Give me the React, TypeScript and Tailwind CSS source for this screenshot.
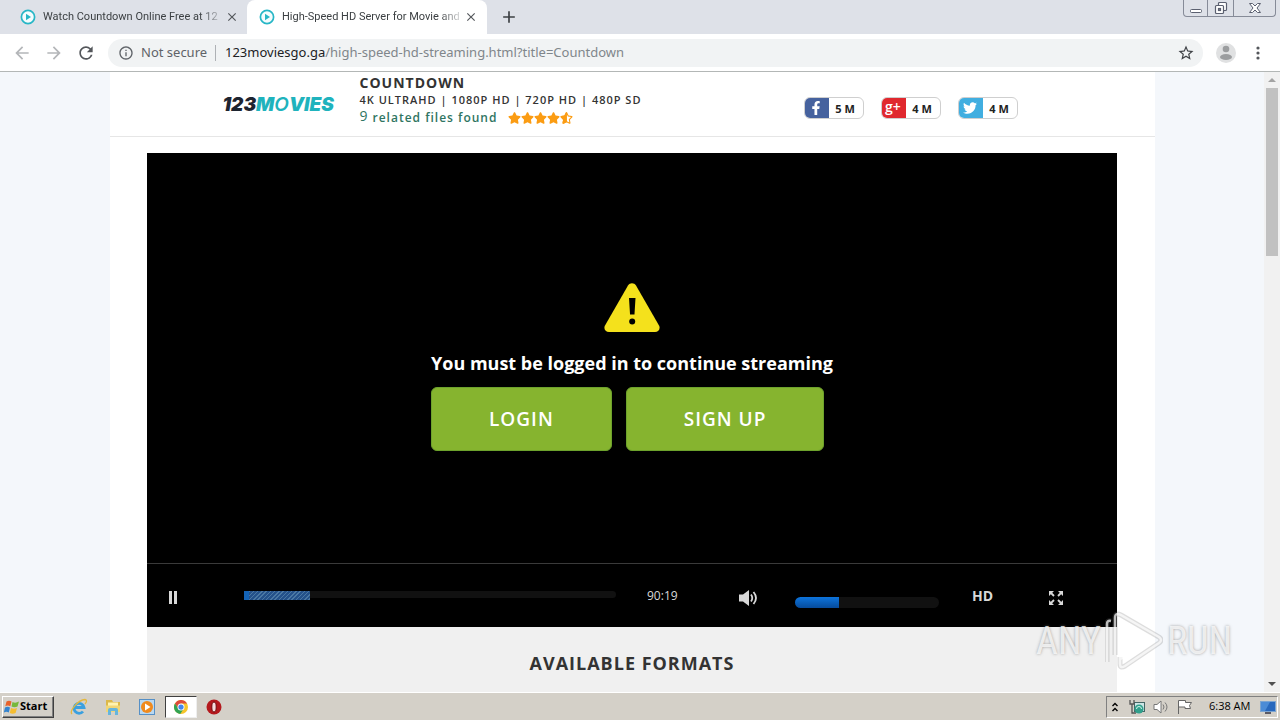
import React from "react";
import { FaFacebookF, FaTwitter, FaStar, FaRegStar } from "react-icons/fa";
import { MdStarBorder, MdArrowBack, MdArrowForward, MdRefresh, MdInfoOutline, MdClose, MdAdd } from "react-icons/md";

const PlayBadge: React.FC = () => (
  <svg viewBox="0 0 16 16" className="w-4 h-4 shrink-0" aria-hidden="true">
    <circle cx="8" cy="8" r="6.6" fill="#f4fcfd" stroke="#27b6c6" strokeWidth="1.7" />
    <path d="M6 4.8v6.4L11 8z" fill="#27b6c6" />
  </svg>
);

const Tab: React.FC<{ title: string; active?: boolean }> = ({ title, active }) => (
  <div
    className={
      active
        ? "flex items-center w-60 h-[34px] pl-3 pr-2 bg-white rounded-t-lg"
        : "flex items-center w-[247px] h-[34px] pl-5 pr-2"
    }
  >
    <PlayBadge />
    <span className="ml-[7px] w-[178px] whitespace-nowrap font-['Roboto',sans-serif] text-[11px] leading-4 text-[#3c4043] [mask-image:linear-gradient(to_right,#000_88%,#0003)]">
      {title}
    </span>
    <button type="button" aria-label="Close tab" className="ml-1 text-[#54575b]">
      <MdClose className="w-[14px] h-[14px]" />
    </button>
  </div>
);

const WindowControls: React.FC = () => (
  <div className="ml-auto mr-1 self-start flex h-[17px] border border-t-0 border-[#868b98] rounded-b-[4px] divide-x divide-[#868b98] text-[#5b6070]">
    <button type="button" aria-label="Minimize" className="w-6 flex items-center justify-center">
      <svg viewBox="0 0 14 14" className="w-[14px] h-[14px]">
        <rect x="1.5" y="8.5" width="11" height="3" rx="1" fill="#fff" stroke="currentColor" />
      </svg>
    </button>
    <button type="button" aria-label="Restore" className="w-[26px] flex items-center justify-center">
      <svg viewBox="0 0 14 14" className="w-[14px] h-[14px]" fill="#fff" stroke="currentColor" strokeWidth="1.2">
        <rect x="4.5" y="1.5" width="8" height="8" rx="1" />
        <rect x="1.5" y="4.5" width="8" height="8" rx="1" />
        <rect x="4.5" y="7.5" width="2" height="2" />
      </svg>
    </button>
    <button type="button" aria-label="Close window" className="w-[41px] flex items-center justify-center">
      <svg viewBox="0 0 14 14" className="w-[14px] h-[14px]" fill="#fff" stroke="currentColor">
        <path d="M1.5 2.5h3L7 5l2.500-2.500h3L9 7l3.500 4.500h-3L7 9l-2.500 2.500h-3L5 7z" />
      </svg>
    </button>
  </div>
);

const Toolbar: React.FC = () => (
  <div className="flex items-center h-[38px] pl-3 pr-5 bg-white border-b border-[#b3b7b6]">
    <button type="button" aria-label="Back" className="w-8 text-[#b4b6b9]">
      <MdArrowBack className="w-5 h-5" />
    </button>
    <button type="button" aria-label="Forward" className="w-8 text-[#b4b6b9]">
      <MdArrowForward className="w-5 h-5" />
    </button>
    <button type="button" aria-label="Reload" className="w-8 text-[#54575b]">
      <MdRefresh className="w-5 h-5" />
    </button>
    <div className="flex flex-1 items-center h-7 px-2 rounded-full bg-[#f1f3f4] text-[13px] text-[#5f6368]">
      <MdInfoOutline className="ml-[2px] w-4 h-4 shrink-0" />
      <span className="ml-[7px] w-[67px] whitespace-nowrap">Not secure</span>
      <span className="ml-[7px] w-px h-4 bg-[#aeb1b5]" />
      <span className="ml-[9px] whitespace-nowrap text-[#80868b]">
        <span className="text-[#202124]">123moviesgo.ga</span>/high-speed-hd-streaming.html?title=Countdown
      </span>
      <button type="button" aria-label="Bookmark" className="ml-auto text-[#3f4246]">
        <MdStarBorder className="w-[18px] h-[18px]" />
      </button>
    </div>
    <button type="button" aria-label="Profile" className="ml-[13px]">
      <svg viewBox="0 0 20 20" className="w-5 h-5">
        <circle cx="10" cy="10" r="10" fill="#e0e1e2" />
        <circle cx="10" cy="6" r="3.300" fill="#9b9d9f" />
        <ellipse cx="10" cy="14" rx="6" ry="3" fill="#9b9d9f" />
      </svg>
    </button>
    <button type="button" aria-label="Menu" className="ml-5">
      <svg viewBox="0 0 4 16" className="w-1 h-4" fill="#54575b">
        <circle cx="2" cy="3" r="1.600" />
        <circle cx="2" cy="8" r="1.600" />
        <circle cx="2" cy="13" r="1.600" />
      </svg>
    </button>
  </div>
);

const socials = [
  { name: "Facebook", count: "5 M", color: "bg-[#46629e]", icon: <FaFacebookF className="w-4 h-[14px]" /> },
  {
    name: "Google Plus",
    count: "4 M",
    color: "bg-[#e0282e]",
    icon: <span className="pb-[2px] text-[14px] leading-4 font-semibold">g+</span>,
  },
  { name: "Twitter", count: "4 M", color: "bg-[#41aee0]", icon: <FaTwitter className="w-4 h-[14px]" /> },
];

const SiteHeader: React.FC = () => (
  <header className="flex items-start h-[65px] pl-[113px] pr-[137px] border-b border-[#e6e6e6]">
    <a
      href="#home"
      className="mt-6 w-[112px] whitespace-nowrap font-['Inter'] text-[19px] leading-[18px] font-black italic text-[#1d2430]"
    >
      123<span className="text-[#1fb3bd]">M<span className="font-semibold">O</span>VIES</span>
    </a>
    <div className="ml-[25px] mt-[3px] whitespace-nowrap text-[#333]">
      <h1 className="text-[14px] leading-4 font-bold tracking-[1px]">COUNTDOWN</h1>
      <p className="mt-px text-[11px] leading-4 font-semibold tracking-[1px]">
        4K ULTRAHD | 1080P HD | 720P HD | 480P SD
      </p>
      <div className="flex items-center h-5 text-[#2f7562]">
        <span className="self-start text-[14px] leading-4">9</span>
        <span className="ml-[5px] text-[12px] font-semibold tracking-[1px]">related files found</span>
        <span className="ml-[11px] flex text-[#fb9c13]">
          <FaStar className="w-[13px] h-3" />
          <FaStar className="w-[13px] h-3" />
          <FaStar className="w-[13px] h-3" />
          <FaStar className="w-[13px] h-3" />
          <span className="relative w-[13px] h-3">
            <FaRegStar className="w-[13px] h-3" />
            <FaStar className="absolute left-0 top-0 w-[13px] h-3 [clip-path:inset(0_50%_0_0)]" />
          </span>
        </span>
      </div>
    </div>
    <div className="ml-auto mt-[25px] flex gap-[17px]">
      {socials.map(({ name, count, color, icon }) => (
        <a
          key={name}
          href="#share"
          aria-label={name}
          className="flex w-[60px] h-[22px] rounded-md border border-[#cfcfcf] overflow-hidden"
        >
          <span className={`${color} -m-px w-[25px] h-[22px] flex items-center justify-center text-white`}>
            {icon}
          </span>
          <span className="flex-1 text-center text-[11px] leading-[22px] font-bold text-[#222]">{count}</span>
        </a>
      ))}
    </div>
  </header>
);

const Player: React.FC = () => (
  <section className="mt-4 mx-auto max-w-[970px] bg-black text-white">
    <div className="flex justify-center h-[410px] pt-[130px]">
      <div>
        <svg viewBox="0 0 56 50" className="mx-auto w-14 h-[50px]" aria-hidden="true">
          <path
            d="M24 2.400C25.800-.6 30.200-.6 32 2.400L55 42.500C56.700 45.500 54.500 49 51 49H5C1.500 49-.7 45.500 1 42.500z"
            fill="#f4e11c"
          />
          <path d="M25 15h6.500l-1 16.500h-4.500z" fill="#000" />
          <circle cx="28.200" cy="38.500" r="3" fill="#000" />
        </svg>
        <p className="mt-4 text-[18px] leading-7 font-bold">You must be logged in to continue streaming</p>
        <div className="mt-[10px] flex gap-[14px] text-[19px] font-semibold">
          <button type="button" className="h-16 px-[57px] rounded-md border border-[#6da22c] bg-[#86b42f] tracking-[1px]">
            LOGIN
          </button>
          <button type="button" className="h-16 px-[57px] rounded-md border border-[#6da22c] bg-[#86b42f] tracking-[1px]">
            SIGN UP
          </button>
        </div>
      </div>
    </div>

    {/* Controls */}
    <div className="grid grid-cols-[97px_minmax(0,1fr)_122px_57px_144px_109px_69px] items-center h-16 pt-1 border-t border-[#3a3a3a] text-[#d8d8d8]">
      <button type="button" aria-label="Pause" className="pl-[22px]">
        <svg viewBox="0 0 8 13" className="w-2 h-[13px]" fill="currentColor">
          <path d="M0 0h3v13H0zM5 0h3v13H5z" />
        </svg>
      </button>
      <div className="relative h-[9px] mb-1">
        <input
          type="range"
          aria-label="Seek"
          defaultValue={0}
          className="block appearance-none w-full h-[7px] rounded-sm bg-[#111] [&::-webkit-slider-thumb]:opacity-0"
        />
        <span className="pointer-events-none absolute left-0 top-0 w-[66px] h-[9px] border-l-[5px] border-[#1463b5] bg-[repeating-linear-gradient(135deg,#4a78a3_0_1px,#24518a_1px_3px)]" />
      </div>
      <span className="mb-1 pl-[31px] text-[12px]">90:19</span>
      <button type="button" aria-label="Mute">
        <svg viewBox="0 0 20 16" className="w-5 h-4" fill="none" stroke="currentColor" strokeWidth="1.800">
          <path d="M1 4.500h4L11 0v16l-6-4.500H1z" fill="currentColor" stroke="none" />
          <path d="M13 4.500q2.500 3.500 0 7M15.500 2q5 6 0 12" />
        </svg>
      </button>
      <input
        type="range"
        aria-label="Volume"
        defaultValue={30}
        className="mt-[10px] block appearance-none w-full h-[11px] rounded-md bg-[#111] bg-[linear-gradient(#0d74dc,#064b9c)] bg-[length:44px_11px] bg-no-repeat [&::-webkit-slider-thumb]:opacity-0"
      />
      <button type="button" className="mb-1 pl-[33px] text-left text-[14px] font-bold">
        HD
      </button>
      <button type="button" aria-label="Full screen">
        <svg viewBox="0 0 16 16" className="w-4 h-4" fill="currentColor" stroke="currentColor" strokeWidth="1.800">
          <path d="M2 2l4 4M14 2l-4 4M2 14l4-4M14 14l-4-4" />
          <path d="M1 1h5L1 6zM15 1v5l-5-5zM1 15v-5l5 5zM15 15h-5l5-5z" stroke="none" />
        </svg>
      </button>
    </div>
  </section>
);

const Scrollbar: React.FC = () => (
  <div className="flex flex-col items-center w-4 shrink-0 bg-[#f1f1f1]" aria-hidden="true">
    <svg viewBox="0 0 16 16" className="w-4 h-4">
      <path d="M4 10l4-4 4 4z" fill="#a3a3a3" />
    </svg>
    <div className="w-3 h-[168px] bg-[#c1c1c1]" />
    <svg viewBox="0 0 16 16" className="mt-auto w-4 h-4">
      <path d="M4 6l4 4 4-4z" fill="#505050" />
    </svg>
  </div>
);

const Watermark: React.FC = () => (
  <div className="pointer-events-none absolute right-12 bottom-5 flex items-center gap-1 font-['Roboto_Condensed','Roboto',sans-serif] text-[38px] leading-[60px] text-white/75 [text-shadow:0_0_3px_#777a]">
    <span>ANY</span>
    <svg viewBox="0 0 58 62" className="w-[58px] h-[62px]" fill="none">
      <path d="M2 52V14q0-4 4-3M10 45V8q0-6 6-3l38 22q4 3 0 6L20 56q-5 3-5-2v-7" stroke="#777" strokeOpacity=".25" strokeWidth="5" />
      <path d="M2 52V14q0-4 4-3M10 45V8q0-6 6-3l38 22q4 3 0 6L20 56q-5 3-5-2v-7M17 14v34l30-18z" stroke="#fff" strokeOpacity=".7" strokeWidth="2.500" />
    </svg>
    <span>RUN</span>
  </div>
);

const Taskbar: React.FC = () => (
  <footer className="flex items-center h-7 shrink-0 px-[2px] border-t border-white bg-[#d4d0c8] text-black">
    <button
      type="button"
      className="flex items-center w-[52px] h-[22px] pl-px border border-t-white border-l-white border-r-[#404040] border-b-[#404040] shadow-[inset_-1px_-1px_#808080] text-[11px] font-bold"
    >
      <svg viewBox="0 0 16 16" className="w-4 h-4 shrink-0">
        <path d="M2.500 2.500q2.500-1.500 5 0L6.300 7.300q-2.500-1.500-5 0z" fill="#e8622a" />
        <path d="M8.500 3q3 1.500 6.500-.5l-1.500 5q-3 1.500-6 0z" fill="#76b83b" />
        <path d="M1 8.500q2.500-1.500 5 0l-1.200 5q-2.500-1.500-5 0z" fill="#3484cf" />
        <path d="M7 9q3 1.500 6 0l-1.400 5q-3 1.300-5.800 0z" fill="#f5bd30" />
      </svg>
      <span>Start</span>
    </button>
    <nav className="ml-2 flex items-center">
      <button type="button" aria-label="Internet Explorer" className="w-[34px] flex justify-center">
        <svg viewBox="0 0 18 18" className="w-[18px] h-[18px]" fill="none">
          <path d="M4.500 9.500h9.500a5 5 0 1 0-1 4" stroke="#3ba0df" strokeWidth="2.800" />
          <path d="M2 16C-1 13 8 2 15 1.500q3 .5 0 4.500" stroke="#e5b83c" strokeWidth="1.300" />
        </svg>
      </button>
      <button type="button" aria-label="Explorer" className="w-[34px] flex justify-center">
        <svg viewBox="0 0 18 18" className="w-[18px] h-[18px]">
          <path d="M2 2h6l1 2h7v10H2z" fill="#dcb849" />
          <path d="M4 4.500h10v6H4z" fill="#fff3b0" />
          <path d="M2 7.500h14V14H2z" fill="#f1d676" />
          <path d="M4 17v-5q0-2 2-2h6q2 0 2 2v5h-3v-4H7v4z" fill="#65b5dc" />
        </svg>
      </button>
      <button type="button" aria-label="Media Player" className="w-[34px] flex justify-center">
        <svg viewBox="0 0 18 18" className="w-[18px] h-[18px]">
          <rect x="1.500" y="1.500" width="15" height="15" fill="#b9d8f1" stroke="#5690c6" />
          <circle cx="9" cy="9" r="6" fill="#f08a1d" />
          <path d="M7 5.500v7L12.500 9z" fill="#fff" />
        </svg>
      </button>
      <button
        type="button"
        aria-label="Chrome"
        className="w-8 h-[22px] ml-px flex items-center justify-center bg-white border border-t-[#404040] border-l-[#404040] border-r-[#eee] border-b-[#eee]"
      >
        <svg viewBox="0 0 16 16" className="w-[14px] h-[14px]">
          <circle cx="8" cy="8" r="8" fill="#f6c52b" />
          <path d="M1.100 4A8 8 0 0 1 15 4H8L5 10z" fill="#de4b3b" />
          <path d="M1.100 4a8 8 0 0 0 6 12l4-6-6 0z" fill="#31a354" />
          <circle cx="8" cy="8" r="4" fill="#fff" />
          <circle cx="8" cy="8" r="3" fill="#4386ed" />
        </svg>
      </button>
      <button type="button" aria-label="Opera" className="w-[34px] flex justify-center">
        <svg viewBox="0 0 16 16" className="w-4 h-4">
          <circle cx="8" cy="8" r="7.500" fill="#b4191d" />
          <ellipse cx="8" cy="8" rx="2.200" ry="5" fill="#f5dede" stroke="#6e0a0d" />
        </svg>
      </button>
    </nav>
    <div className="ml-auto flex items-center h-[22px] w-[172px] pl-1 border border-t-[#808080] border-l-[#808080] border-r-white border-b-white text-[11px]">
      <svg viewBox="0 0 8 12" className="w-2 h-3" fill="none" stroke="#000" strokeWidth="1.400">
        <path d="M1.500 5L4 2.500 6.500 5M1.500 10L4 7.500 6.500 10" />
      </svg>
      <svg viewBox="0 0 16 16" className="ml-[10px] w-4 h-4">
        <rect x="5.500" y="3.500" width="10" height="9" fill="#cde6e6" stroke="#466" />
        <path d="M1 1v4h4V1M3 5v9h4" fill="none" stroke="#555" strokeWidth="1.300" />
        <circle cx="10" cy="10" r="4.500" fill="#31a08c" />
        <path d="M7.500 10a2.500 2.500 0 0 1 5 0" fill="none" stroke="#d4f4e9" />
      </svg>
      <svg viewBox="0 0 16 16" className="ml-2 w-4 h-4" fill="#fff" stroke="#777">
        <path d="M1 5.500h3L8 2v12l-4-3.500H1z" />
        <path d="M10 5.500q2 2.500 0 5M12 3.500q4 4.500 0 9" fill="none" />
      </svg>
      <svg viewBox="0 0 16 16" className="ml-2 w-4 h-4" fill="#fff" stroke="#666">
        <path d="M1.500 15V1.500h7v2h6l-2 3 1 3H8v-1.500H2" />
      </svg>
      <span className="ml-4 w-[42px] whitespace-nowrap">6:38 AM</span>
      <svg viewBox="0 0 16 14" className="ml-auto mr-px w-4 h-[14px]">
        <rect x=".5" y="1.500" width="15" height="10" fill="#2868bd" stroke="#7ba4d1" />
        <path d="M1 2h9l-5 9H1z" fill="#4b8bd6" />
        <path d="M5 13h6" stroke="#334" strokeWidth="1.500" />
      </svg>
    </div>
  </footer>
);

const App: React.FC = () => {
  return (
    <div className="flex flex-col h-screen overflow-hidden font-['Open_Sans','Noto_Sans',sans-serif]">
      <div className="font-['Noto_Sans',sans-serif]">
        <div className="flex items-center h-[34px] bg-[#dee1e8]">
          <Tab title="Watch Countdown Online Free at 12" />
          <Tab title="High-Speed HD Server for Movie and" active />
          <button type="button" aria-label="New tab" className="ml-3 text-[#3c4043]">
            <MdAdd className="w-5 h-5" />
          </button>
          <WindowControls />
        </div>
        <Toolbar />
      </div>

      <div className="relative flex flex-1 min-h-0">
        <main className="flex-1 min-w-0 overflow-hidden bg-[#f4f7fb]">
          <div className="mx-auto max-w-[1045px] min-h-full bg-white">
            <SiteHeader />
            <Player />
            <section className="mx-auto max-w-[970px] pt-[22px] pb-6 bg-[#f0f0f0]">
              <h2 className="text-center text-[18px] leading-7 font-bold tracking-[1px] text-[#333]">
                AVAILABLE FORMATS
              </h2>
            </section>
          </div>
        </main>
        <Scrollbar />
        <Watermark />
      </div>

      <Taskbar />
    </div>
  );
};

export default App;
